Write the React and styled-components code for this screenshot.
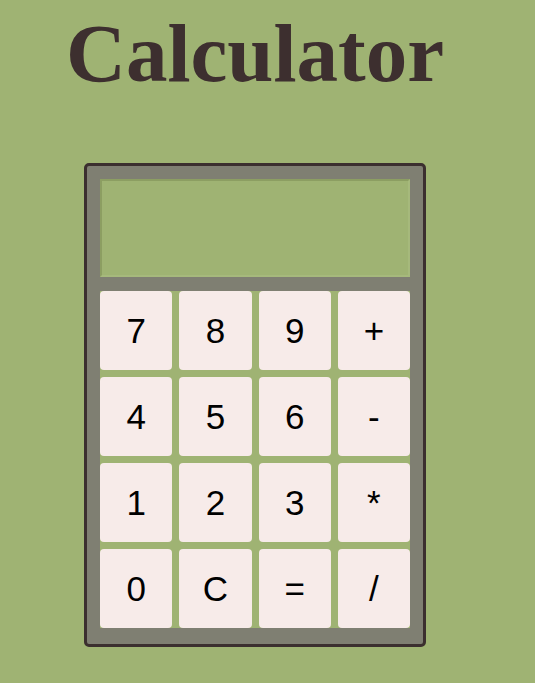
import React from "react";
import styled, { createGlobalStyle } from "styled-components";

const Global = createGlobalStyle`
  html, body { margin: 0; padding: 0; }
  body {
    background: #9fb373;
    font-family: "Liberation Sans", Arial, sans-serif;
  }
`;

const Page = styled.div`
  width: 510px;
  display: flex;
  flex-direction: column;
  align-items: center;
`;

const Title = styled.h1`
  margin: 6px 0 0;
  font-family: "Liberation Serif", "Times New Roman", serif;
  font-weight: bold;
  font-size: 83px;
  line-height: 94px;
  color: #3d2f2f;
`;

const Body = styled.div`
  margin-top: 63px;
  width: 342px;
  box-sizing: border-box;
  background: #7f7f72;
  border: 3px solid #3b2f2f;
  border-radius: 5px;
  padding: 13px 13px 16px;
  display: flex;
  flex-direction: column;
`;

const Display = styled.div`
  height: 98px;
  box-sizing: border-box;
  background: #9fb373;
  border-style: solid;
  border-width: 2px;
  border-color: #8c9e62 #a6b97c #a6b97c #8c9e62;
  margin-bottom: 14px;
`;

const Keys = styled.div`
  display: grid;
  grid-template-columns: repeat(4, 1fr);
  grid-auto-rows: 79px;
  gap: 7px;
  background: #9fb373;
`;

const Key = styled.button`
  border: none;
  border-radius: 4px;
  background: #f7ebe9;
  color: #000;
  font-family: "Liberation Sans", Arial, sans-serif;
  font-size: 35px;
  padding: 0;
  margin: 0;
  cursor: pointer;
  display: flex;
  align-items: center;
  justify-content: center;
`;

const keys = ["7", "8", "9", "+", "4", "5", "6", "-", "1", "2", "3", "*", "0", "C", "=", "/"];

export default function App() {
  return (
    <>
      <Global />
      <Page>
        <Title>Calculator</Title>
        <Body>
          <Display />
          <Keys>
            {keys.map((k) => (
              <Key key={k}>{k}</Key>
            ))}
          </Keys>
        </Body>
      </Page>
    </>
  );
}
